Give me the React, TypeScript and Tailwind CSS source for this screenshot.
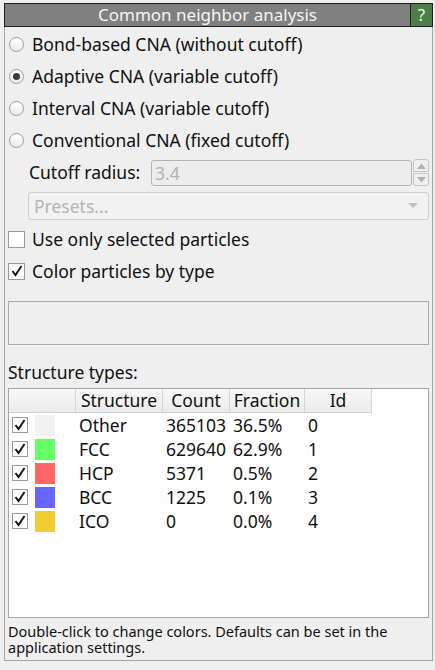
import React from "react";

function Radio({ checked }: { checked?: boolean }) {
  return (
    <div className="w-[15px] h-[15px] rounded-full border border-[#9a9a9a] bg-gradient-to-b from-[#ffffff] to-[#ececec] flex items-center justify-center shrink-0">
      {checked && <div className="w-[7px] h-[7px] rounded-full bg-[#3a3a3a]" />}
    </div>
  );
}

function Check({ checked, size = 17 }: { checked?: boolean; size?: number }) {
  return (
    <div
      className={`${size === 17 ? "w-[17px] h-[17px]" : "w-[16px] h-[16px]"} border border-[#9a9a9a] bg-white flex items-center justify-center shrink-0`}
    >
      {checked && (
        <svg width="12" height="12" viewBox="0 0 12 12">
          <path d="M1.5 6 L4.5 10 L10.5 1" fill="none" stroke="#111" strokeWidth="1.9" />
        </svg>
      )}
    </div>
  );
}

const rows = [
  { name: "Other", count: "365103", frac: "36.5%", id: "0", color: "bg-[#f2f2f2]" },
  { name: "FCC", count: "629640", frac: "62.9%", id: "1", color: "bg-[#66ff66]" },
  { name: "HCP", count: "5371", frac: "0.5%", id: "2", color: "bg-[#ff6666]" },
  { name: "BCC", count: "1225", frac: "0.1%", id: "3", color: "bg-[#6666ff]" },
  { name: "ICO", count: "0", frac: "0.0%", id: "4", color: "bg-[#f2cc33]" },
];

export default function App() {
  return (
    <div
      className="w-[435px] h-[670px] bg-[#efefef] text-[#101010] pt-[3px] pl-[4px]"
      style={{ fontFamily: '"Noto Sans", "DejaVu Sans", sans-serif' }}
    >
      <div className="w-[429px] h-[658px] flex flex-col">
        {/* Title */}
        <div className="h-[24px] flex border border-[#1e1e1e] shrink-0">
          <div className="flex-1 bg-[#808080] text-[#f4f4f4] text-[17px] leading-[22px] text-center">
            Common neighbor analysis
          </div>
          <div className="w-[22px] bg-[#4e7d4a] border-l border-[#1e1e1e] text-[#f4f4f4] text-[17px] leading-[22px] text-center">
            ?
          </div>
        </div>
        <div className="flex-1 border-x border-b border-[#a6a6a6] flex flex-col px-[3px] pt-[2px]">
          {[
            ["Bond-based CNA (without cutoff)", false],
            ["Adaptive CNA (variable cutoff)", true],
            ["Interval CNA (variable cutoff)", false],
            ["Conventional CNA (fixed cutoff)", false],
          ].map(([label, c], i) => (
            <div key={i} className={`${i === 0 ? "h-[31px]" : "h-[32px]"} flex items-center gap-[8px] pl-[1px] text-[17.5px]`}>
              <Radio checked={c as boolean} />
              <span>{label as string}</span>
            </div>
          ))}
          {/* cutoff */}
          <div className="flex items-center pl-[21px] mt-[3px] h-[27px]">
            <span className="text-[17.5px] w-[122px]">Cutoff radius:</span>
            <div className="flex-1 h-[26px] border border-[#b4b4b4] rounded-[3px] bg-[#ededed] text-[#b2b2b2] text-[17.5px] leading-[24px] pl-[3px]">
              3.4
            </div>
            <div className="w-[16px] h-[27px] ml-[1px] flex flex-col">
              <div className="h-[13px] border border-[#c4c4c4] rounded-t-[3px] flex items-center justify-center bg-[#f0f0f0]">
                <svg width="9" height="6" viewBox="0 0 9 6"><path d="M0 6 L4.5 0.5 L9 6 Z" fill="#b0b0b0" /></svg>
              </div>
              <div className="h-[13px] mt-[1px] border border-[#c4c4c4] rounded-b-[3px] flex items-center justify-center bg-[#f0f0f0]">
                <svg width="9" height="6" viewBox="0 0 9 6"><path d="M0 0 L4.5 5.5 L9 0 Z" fill="#b0b0b0" /></svg>
              </div>
            </div>
          </div>
          <div className="ml-[20px] mt-[6px] h-[28px] border border-[#cdcdcd] rounded-[3px] bg-[#f2f2f2] flex items-center pl-[5px] pr-[10px] text-[17.5px] text-[#b4b4b4]">
            <span className="flex-1">Presets...</span>
            <svg width="10" height="6" viewBox="0 0 10 6"><path d="M0 0 L5 5 L10 0 Z" fill="#c0c0c0" /></svg>
          </div>
          <div className="h-[32px] mt-[3px] flex items-center gap-[7px] text-[17.5px]">
            <Check />
            <span>Use only selected particles</span>
          </div>
          <div className="h-[32px] flex items-center gap-[7px] text-[17.5px]">
            <Check checked />
            <span>Color particles by type</span>
          </div>
          <div className="h-[44px] mt-[14px] border border-[#ababab] bg-[#efefef]" />
          <div className="mt-[16px] text-[17.5px] leading-[22px]">Structure types:</div>
          {/* table */}
          <div className="mt-[5px] h-[230px] border border-[#a6a6a6] bg-white flex flex-col text-[17.5px]">
            <div className="flex h-[24px] shrink-0">
              <div className="flex border-b border-[#d2d2d2] bg-gradient-to-b from-[#f8f8f8] to-[#ebebeb]">
                <div className="w-[67px] border-r border-[#d6d6d6]" />
                <div className="w-[87px] border-r border-[#d6d6d6] text-center leading-[22px]">Structure</div>
                <div className="w-[67px] border-r border-[#d6d6d6] text-center leading-[22px]">Count</div>
                <div className="w-[75px] border-r border-[#d6d6d6] text-center leading-[22px]">Fraction</div>
                <div className="w-[67px] border-r border-[#d6d6d6] text-center leading-[22px]">Id</div>
              </div>
            </div>
            {rows.map((r) => (
              <div key={r.name} className="flex h-[24px] items-center">
                <div className="w-[67px] flex items-center pl-[3px]">
                  <Check checked size={16} />
                  <div className={`w-[20px] h-[21px] ml-[7px] ${r.color}`} />
                </div>
                <div className="w-[87px] pl-[3px]">{r.name}</div>
                <div className="w-[67px] pl-[3px]">{r.count}</div>
                <div className="w-[75px] pl-[3px]">{r.frac}</div>
                <div className="w-[67px] pl-[3px]">{r.id}</div>
              </div>
            ))}
          </div>
          <div className="mt-[5px] text-[14.5px] leading-[16px]">
            Double-click to change colors. Defaults can be set in the application settings.
          </div>
        </div>
      </div>
    </div>
  );
}
